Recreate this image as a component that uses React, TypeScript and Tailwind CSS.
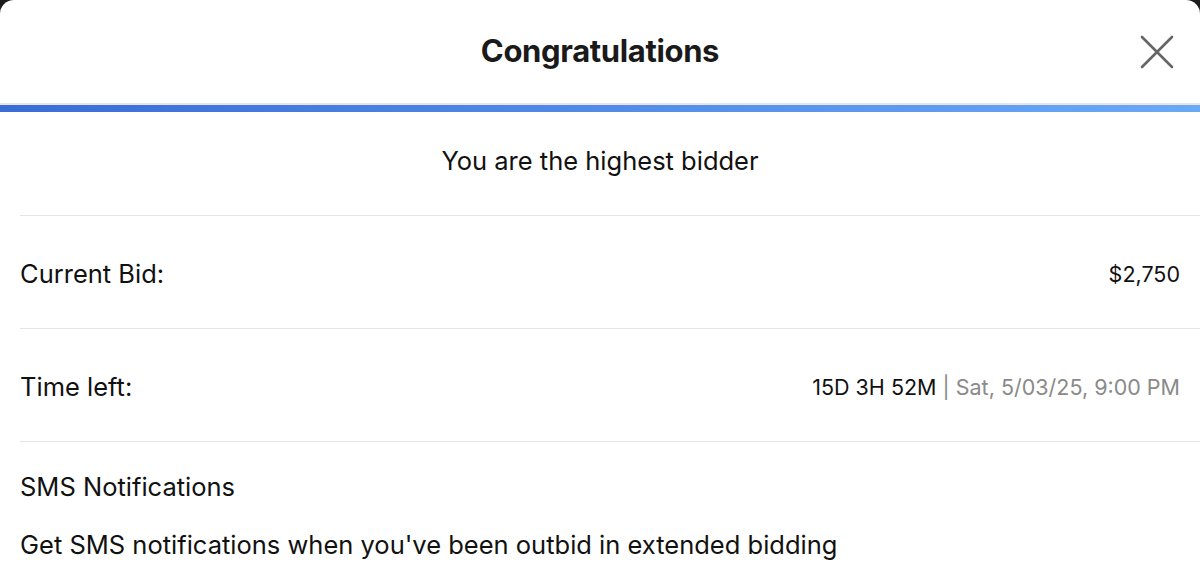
const rows = [
  { label: "Current Bid:", value: <span className="text-[#111]">$2,750</span> },
  {
    label: "Time left:",
    value: (
      <span>
        <span className="text-[#111]">15D 3H 52M</span>
        <span className="text-[#8a8a8a]"> | Sat, 5/03/25, 9:00 PM</span>
      </span>
    ),
  },
];

const App = () => {
  return (
    <div className="w-[1200px] h-[569px] bg-[#1c1c1c] overflow-hidden font-['Inter',sans-serif]">
      <div className="bg-white h-full rounded-t-[14px]">
        {/* Header */}
        <div className="relative h-[103px] flex items-center justify-center">
          <h2 className="text-[31px] font-bold text-[#1a1a1a] tracking-[-0.35px]">
            Congratulations
          </h2>
          <button className="absolute right-[26px] top-[35px] w-[34px] h-[34px]">
            <svg viewBox="0 0 34 34" className="w-full h-full">
              <path
                d="M2 2 L32 32 M32 2 L2 32"
                stroke="#666"
                strokeWidth="2.6"
                strokeLinecap="round"
              />
            </svg>
          </button>
        </div>

        {/* Progress */}
        <div className="h-[9px] bg-[#e6e6e6] pt-[2px]">
          <div className="h-[7px] w-full bg-gradient-to-r from-[#3a6cd8] to-[#6aa9f6]" />
        </div>

        <div className="pl-5">
          <div className="h-[104px] border-b border-[#e4e4e4] flex items-center justify-center pr-5">
            <p className="text-[25.5px] text-[#111] mt-[-4px]">You are the highest bidder</p>
          </div>

          {rows.map((row) => (
            <div
              key={row.label}
              className="h-[113px] border-b border-[#e4e4e4] flex items-center justify-between pr-5 pt-[4px]"
            >
              <span className="text-[25.5px] text-[#111]">{row.label}</span>
              <span className="text-[21.5px]">{row.value}</span>
            </div>
          ))}

          <div className="pr-5">
            <p className="text-[25.5px] text-[#111] leading-[32px] mt-[29px]">SMS Notifications</p>
            <p className="text-[25.5px] text-[#111] leading-[32px] mt-[26px]">
              Get SMS notifications when you've been outbid in extended bidding
            </p>
          </div>
        </div>
      </div>
    </div>
  );
};

export default App;
